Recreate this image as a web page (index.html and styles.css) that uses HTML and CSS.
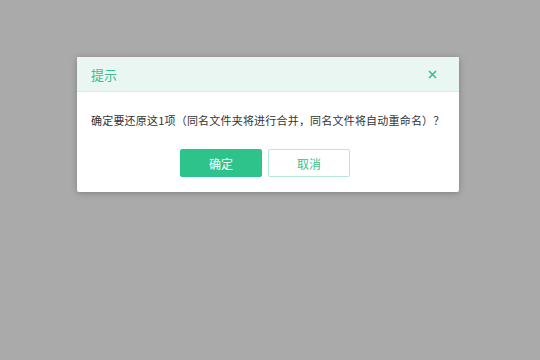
FILE: index.html
```html
<!DOCTYPE html>
<html lang="zh-CN">
<head>
  <meta charset="UTF-8" />
  <title>提示</title>
  <link rel="stylesheet" href="styles.css">
</head>
<body>
  <div class="dialog">
    <div class="dialog-header">
      <span class="dialog-title">提示</span>
      <span class="dialog-close">
        <svg width="9" height="9" viewBox="0 0 9 9"><path d="M1 1 L8 8 M8 1 L1 8" stroke="#2ec38a" stroke-width="1.6" fill="none"/></svg>
      </span>
    </div>
    <div class="dialog-body">
      <p class="message">确定要还原这1项（同名文件夹将进行合并，同名文件将自动重命名）？</p>
      <div class="actions">
        <button class="btn btn-ok">确定</button>
        <button class="btn btn-cancel">取消</button>
      </div>
    </div>
  </div>
</body>
</html>
```

FILE: styles.css
```css
* {
  box-sizing: border-box;
  margin: 0;
  padding: 0;
}

body {
  background-color: #aaaaaa;
  font-family: "Noto Sans CJK SC", "Noto Sans", sans-serif;
  height: 360px;
  padding: 57px 0 0 77px;
}

.dialog {
  width: 382px;
  background: #ffffff;
  border-radius: 2px;
  box-shadow: 0 1px 6px rgba(0, 0, 0, 0.25);
}

.dialog-header {
  height: 35px;
  display: flex;
  align-items: center;
  justify-content: space-between;
  padding: 0 22px 0 14px;
  background-color: #eaf6f1;
  border-bottom: 1px solid #d8eee5;
}

.dialog-title {
  font-size: 13px;
  color: #3cbf8c;
}

.dialog-close {
  display: flex;
}

.dialog-body {
  padding: 20px 14px 15px;
}

.message {
  font-size: 11px;
  line-height: 16px;
  letter-spacing: 0.2px;
  white-space: nowrap;
  color: #333333;
}

.actions {
  display: flex;
  justify-content: center;
  gap: 6px;
  margin-top: 21px;
  padding-right: 6px;
}

.btn {
  width: 82px;
  height: 28px;
  font-family: inherit;
  font-size: 12px;
  border-radius: 2px;
  cursor: pointer;
}

.btn-ok {
  background-color: #2ec38a;
  border: 1px solid #2ec38a;
  color: #ffffff;
}

.btn-cancel {
  background-color: #ffffff;
  border: 1px solid #b3ead4;
  color: #3cbf8c;
}
```
